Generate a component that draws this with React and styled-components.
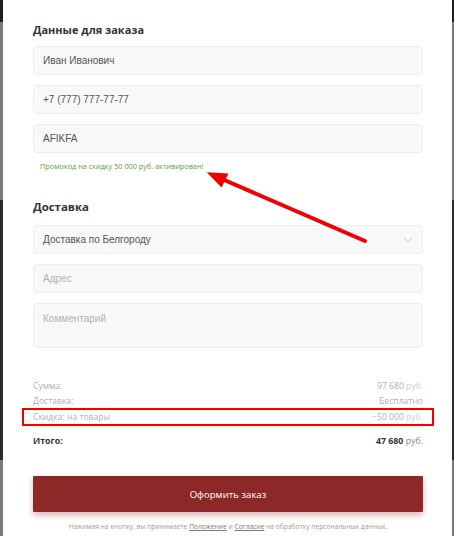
import React from "react";
import styled, { createGlobalStyle } from "styled-components";

const Global = createGlobalStyle`
  * { box-sizing: border-box; }
  html, body { margin: 0; padding: 0; background: #262626; }
  body { font-family: "Open Sans", "Liberation Sans", sans-serif; }
`;

const Page = styled.div`
  width: 454px;
  height: 536px;
  display: flex;
  background: linear-gradient(to bottom, #1f1f1f 0 22px, #7a7a7a 22px 200px, #2b2b2b 200px 460px, #7a7a7a 460px);
  padding: 0 2px 0 3px;
  overflow: hidden;
`;

const Modal = styled.div`
  position: relative;
  flex: 1;
  background: #fff;
  padding: 22px 29px 0 30px;
  display: flex;
  flex-direction: column;
`;

const Title = styled.h2`
  margin: ${(p) => p.$mt || 0}px 0 0;
  font-family: "Open Sans", sans-serif;
  font-weight: 700;
  font-size: ${(p) => p.$size || 11}px;
  line-height: 16px;
  color: #333;
`;

const Fields = styled.div`
  display: flex;
  flex-direction: column;
  gap: 10px;
  margin-top: ${(p) => p.$top || 8}px;
`;

const Field = styled.div`
  position: relative;
  height: ${(p) => p.$h || 29}px;
  background: #f8f8f8;
  border: 1px solid #eeeeee;
  border-radius: 4px;
  padding: ${(p) => (p.$area ? "9px" : "0")} 9px 0 9px;
  display: flex;
  align-items: ${(p) => (p.$area ? "flex-start" : "center")};
  font-family: "Liberation Sans", Arial, sans-serif;
  font-size: 10px;
  color: ${(p) => (p.$placeholder ? "#b3b3b3" : "#555")};
`;

const Chevron = styled.svg`
  position: absolute;
  right: 9px;
  top: 50%;
  margin-top: -3px;
`;

const Promo = styled.div`
  margin: 8px 0 0 7px;
  font-size: 7.3px;
  line-height: 10px;
  color: #5b9e35;
`;

const Summary = styled.div`
  margin-top: 31px;
  display: flex;
  flex-direction: column;
`;

const Row = styled.div`
  display: flex;
  justify-content: space-between;
  align-items: center;
  height: 14.5px;
  font-size: 8.6px;
  color: #b0b0b0;
`;

const BoxedRow = styled(Row)`
  height: 18px;
  margin: 0 -11px;
  padding: 0 9px;
  border: 2px solid #f20000;
`;

const Divider = styled.div`
  height: 1px;
  background: #f0f0f0;
  margin: 1px 0 0;
`;

const TotalRow = styled(Row)`
  height: 26px;
  color: #333;
  font-weight: 700;
  font-size: 8.8px;
`;

const Unit = styled.span`
  color: ${(p) => p.$color || "#cfcfcf"};
  font-weight: 400;
`;

const Button = styled.button`
  margin-top: 22px;
  height: 36px;
  width: 100%;
  border: none;
  border-radius: 1px;
  background: #8c2828;
  color: #fff;
  font-family: "Open Sans", sans-serif;
  font-size: 9.6px;
  box-shadow: 0 3px 6px rgba(140, 40, 40, 0.35);
`;

const Note = styled.p`
  margin: 10px 0 0;
  text-align: center;
  font-size: 6.7px;
  color: #9c9c9c;
  a {
    color: #7a7a7a;
    text-decoration: underline;
  }
`;

const Arrow = styled.svg`
  position: absolute;
  left: -3px;
  top: 0;
  pointer-events: none;
`;

export default function App() {
  return (
    <>
      <Global />
      <Page>
        <Modal>
          <Title $size={11}>Данные для заказа</Title>
          <Fields $top={8}>
            <Field>Иван Иванович</Field>
            <Field>+7 (777) 777-77-77</Field>
            <Field>AFIKFA</Field>
          </Fields>
          <Promo>Промокод на скидку 50 000 руб. активирован!</Promo>
          <Title $size={11.4} $mt={28}>Доставка</Title>
          <Fields $top={10}>
            <Field>
              Доставка по Белгороду
              <Chevron width="10" height="6" viewBox="0 0 10 6">
                <path d="M1 1l4 4 4-4" fill="none" stroke="#c8c8c8" strokeWidth="1" />
              </Chevron>
            </Field>
            <Field $placeholder>Адрес</Field>
            <Field $placeholder $area $h={45}>Комментарий</Field>
          </Fields>
          <Summary>
            <Row>
              <span>Сумма:</span>
              <span>97 680 <Unit>руб.</Unit></span>
            </Row>
            <Row>
              <span>Доставка:</span>
              <span>Бесплатно</span>
            </Row>
            <BoxedRow>
              <span>Скидка: на товары</span>
              <span>−50 000 <Unit>руб.</Unit></span>
            </BoxedRow>
            <Divider />
            <TotalRow>
              <span>Итого:</span>
              <span>47 680 <Unit $color="#888">руб.</Unit></span>
            </TotalRow>
          </Summary>
          <Button>Оформить заказ</Button>
          <Note>
            Нажимая на кнопку, вы принимаете <a>Положение</a> и <a>Согласие</a> на обработку персональных данных.
          </Note>
          <Arrow width="454" height="536" viewBox="0 0 454 536">
            <line x1="365" y1="241" x2="222" y2="179" stroke="#f20000" strokeWidth="4" strokeLinecap="round" />
            <polygon points="206.7,172.3 228.5,173.5 221.5,187.5" fill="#f20000" />
          </Arrow>
        </Modal>
      </Page>
    </>
  );
}
